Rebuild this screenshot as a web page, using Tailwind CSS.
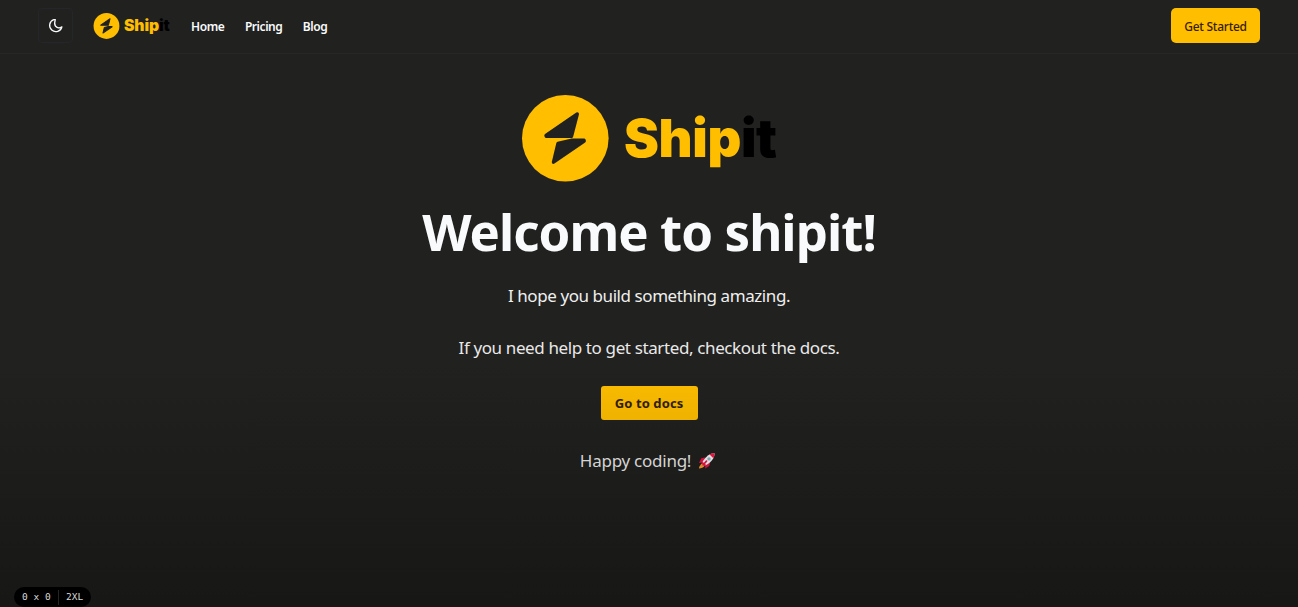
<!DOCTYPE html>
<html lang="en">
<head>
    <meta charset="UTF-8">
    <meta name="viewport" content="width=device-width, initial-scale=1.0">
    <title>Shipit</title>
    <script src="https://cdn.jsdelivr.net/npm/@tailwindcss/browser@4"></script>
</head>
<body class="h-screen overflow-hidden flex flex-col bg-[#212120] bg-linear-to-b from-[#212120] from-60% to-[#171716] font-['Noto_Sans',sans-serif] text-[#f9fafb]">
    <!-- Logo, shared by the header and the hero -->
    <svg class="hidden">
        <symbol id="logo" viewBox="-1 0 256 87">
            <circle cx="43.3" cy="43.3" r="43.3" fill="#ffbe00"/>
            <g fill="#212120" stroke="#212120" stroke-width="3.4" stroke-linejoin="round">
                <path d="M24 40.5 55.3 19 49.5 41.3H24.3z"/>
                <path d="M36 48.5 49 45.3H62L62.2 46 31.5 67.2z"/>
            </g>
            <text x="102" y="61.9" font-family="Inter, sans-serif" font-size="52.5" font-weight="900" textLength="153" fill="#ffbe00">Ship<tspan fill="#000">it</tspan></text>
        </symbol>
    </svg>

    <!-- Header -->
    <header class="h-[54px] shrink-0 flex items-center justify-between px-[38px] pb-[2px] border-b border-[#272726]">
        <div class="flex items-center">
            <button class="w-[35px] h-[35px] flex items-center justify-center rounded border border-[#25262a]">
                <svg class="w-4 h-4" viewBox="0 0 16 16" fill="none" stroke="#f9fafb" stroke-width="1.3" stroke-linejoin="round">
                    <path d="M5.8 1.6A6.2 6.2 0 1 0 13.9 8.8C11.5 10.6 8.8 9.8 7.4 8 5.9 6 6.9 3 7.3 1.6z"/>
                </svg>
            </button>
            <svg class="w-[77px] h-[26px] ml-5"><use href="#logo"/></svg>
            <nav class="flex gap-[20.5px] ml-[21px] pt-[3px] text-[12px] font-semibold">
                <a href="#" class="tracking-[-0.4px]">Home</a>
                <a href="#" class="tracking-[-0.45px]">Pricing</a>
                <a href="#" class="tracking-[-0.4px]">Blog</a>
            </nav>
        </div>
        <button class="w-[89px] h-[35px] pt-[2px] rounded-[5px] bg-[#ffbe00] text-[12px] font-medium tracking-[-0.25px] whitespace-nowrap text-[#382006]">Get Started</button>
    </header>

    <!-- Hero -->
    <main class="flex flex-col items-center pt-[41px]">
        <svg class="w-[256px] h-[87px]"><use href="#logo"/></svg>
        <h1 class="mt-[19px] h-[60px] leading-[60px] text-[51px] font-bold tracking-[-0.95px] whitespace-nowrap">Welcome to shipit!</h1>
        <p class="mt-[22px] h-[26px] leading-[26px] text-[17px] tracking-[-0.43px] text-[#efefee]">I hope you build something amazing.</p>
        <p class="mt-[26px] h-[26px] leading-[26px] text-[17px] tracking-[-0.38px] text-[#e9e9e8]">If you need help to get started, checkout the docs.</p>
        <button class="mt-[25px] w-[97px] h-[34px] pt-px rounded-[3px] bg-linear-to-b from-[#f8b900] to-[#efb200] text-[13px] font-bold tracking-[0.1px] whitespace-nowrap text-[#2e1d08]">Go to docs</button>
        <div class="mt-[28px] h-[26px] flex items-center gap-[7px] pr-[2px]">
            <p class="leading-[26px] text-[17px] tracking-[-0.25px] text-[#d4d4d3]">Happy coding!</p>
            <svg class="w-[18px] h-[18px]" viewBox="0 0 19 18">
                <path d="M8 5 3.5 6.2 1 11 5 10.5zM13 10 11.8 14.3 7.5 17 8 12.6z" fill="#d0143c"/>
                <path d="M4.7 11 7.3 13.6C6 16 3.5 17 1 17 1 14.5 2.5 13 4.7 11z" fill="#e08a2c"/>
                <path d="M17.6.7C12.5.8 8 4 4.5 10.5L7.8 13.7C14 10.4 17.4 6 17.6.7z" fill="#e3e0e5"/>
                <path d="M17.6.7C15.6.7 13.8 1.1 12 2L16.2 6.1C17.2 4.3 17.6 2.5 17.6.7zM4.9 9.7 8.6 13.3 7 14.6 3.5 11.2z" fill="#dc1740"/>
                <circle cx="11.6" cy="6.8" r="1.8" fill="#7fa5ad"/>
                <path d="M9 9.2 5.5 13" stroke="#d0143c" stroke-width="1.8" stroke-linecap="round"/>
            </svg>
        </div>
    </main>

    <!-- Breakpoint indicator -->
    <div class="fixed left-[14px] top-[587px] w-[77px] h-[20px] flex items-center rounded-full bg-black pl-2 pt-px font-['DejaVu_Sans_Mono',monospace] text-[9.5px] text-[#d8d8d8] whitespace-nowrap">
        <span class="w-[37px] border-r border-[#252525]">0 x 0</span>
        <span class="pl-[7px]">2XL</span>
    </div>
</body>
</html>
